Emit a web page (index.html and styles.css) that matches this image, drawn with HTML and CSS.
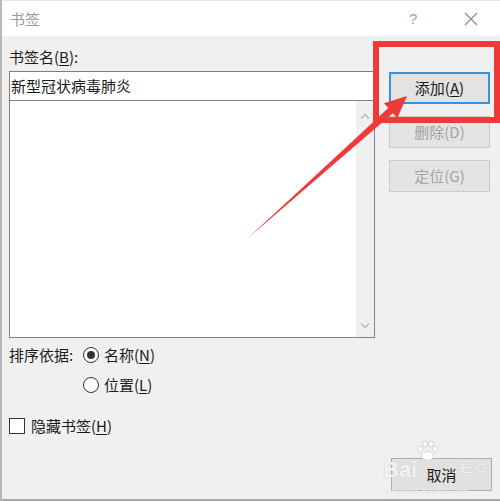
FILE: index.html
```html
<!DOCTYPE html>
<html lang="zh-CN">
<head>
<meta charset="utf-8">
<title>书签</title>
<link rel="stylesheet" href="styles.css">
</head>
<body>
<div class="window">
  <div class="titlebar">
    <span class="title">书签</span>
    <span class="help">?</span>
    <svg class="close" width="14" height="14" viewBox="0 0 14 14"><path d="M1 1L13 13M13 1L1 13" stroke="#8a8a8a" stroke-width="1.2" fill="none"/></svg>
  </div>
  <div class="body">
    <div class="main">
      <div class="left">
        <div class="label">书签名(<u>B</u>):</div>
        <div class="input">新型冠状病毒肺炎</div>
        <div class="list">
          <div class="scroll">
            <svg width="10" height="6" viewBox="0 0 10 6"><path d="M1 5.5L5 1.5L9 5.5" stroke="#b0b0b0" stroke-width="1.2" fill="none"/></svg>
            <svg width="10" height="6" viewBox="0 0 10 6"><path d="M1 0.5L5 4.5L9 0.5" stroke="#b0b0b0" stroke-width="1.2" fill="none"/></svg>
          </div>
        </div>
        <div class="sort">
          <span class="sortlabel">排序依据:</span>
          <div class="radios">
            <div class="opt"><span class="radio checked"></span>名称(<u>N</u>)</div>
            <div class="opt"><span class="radio"></span>位置(<u>L</u>)</div>
          </div>
        </div>
        <div class="check"><span class="box"></span>隐藏书签(<u>H</u>)</div>
      </div>
      <div class="buttons">
        <div class="btn default">添加(<u>A</u>)</div>
        <div class="btn disabled">删除(D)</div>
        <div class="btn disabled">定位(G)</div>
      </div>
    </div>
    <div class="footer">
      <div class="btn">取消</div>
    </div>
  </div>
  <div class="redbox"></div>
  <svg class="arrow" width="500" height="501" viewBox="0 0 500 501"><polygon points="247,239 388.3,108.1 383.9,103.2 407,96 397.3,118.2 392.9,113.3" fill="#f03a3a"/></svg>
  <div class="wm-bai">Bai</div>
  <svg class="wm-paw" width="24" height="22" viewBox="0 0 24 22"><g fill="rgba(255,255,255,0.9)" stroke="#c8c8c8" stroke-width="0.8"><ellipse cx="5" cy="9" rx="2.5" ry="3"/><ellipse cx="10" cy="4" rx="2.5" ry="3"/><ellipse cx="16" cy="4" rx="2.5" ry="3"/><ellipse cx="20" cy="9" rx="2.5" ry="3"/><ellipse cx="12.5" cy="16" rx="6" ry="4.5"/></g></svg>
  <div class="wm-jy">经验</div>
  <div class="wm-url">jingyan.baidu.com</div>
</div>
</body>
</html>
```
FILE: styles.css
```css
* { box-sizing: border-box; }
html, body { margin: 0; padding: 0; background: #ffffff; }
body { width: 500px; height: 501px; overflow: hidden; font-family: "Noto Sans CJK SC", "Noto Sans", sans-serif; font-size: 15px; color: #1a1a1a; }
u { text-decoration: underline; text-underline-offset: 2px; }
.window { position: relative; width: 500px; height: 501px; border-left: 2px solid #b8b8b8; border-bottom: 2px solid #a8a8a8; display: flex; flex-direction: column; }
.titlebar { height: 36px; background: #ffffff; display: flex; align-items: center; padding-left: 8px; border-top: 1px solid #e4e4e4; }
.title { color: #9a9a9a; font-size: 15px; line-height: 20px; flex: 1; }
.help { color: #a0a0a0; font-size: 15px; width: 14px; margin-right: 41px; font-family: "Liberation Sans", sans-serif; }
.close { margin-right: 22px; }
.body { flex: 1; background: #f0f0f0; display: flex; flex-direction: column; padding: 11px 0 0 7px; }
.main { display: flex; }
.left { width: 366px; display: flex; flex-direction: column; }
.label { line-height: 20px; height: 20px; }
.input { margin-top: 4px; height: 30px; background: #fff; border: 1px solid #7e7e7e; line-height: 27px; padding-left: 1px; }
.list { margin-top: -1px; height: 238px; background: #fff; border: 1px solid #828282; display: flex; justify-content: flex-end; }
.scroll { width: 18px; background: #f0f0f0; display: flex; flex-direction: column; justify-content: space-between; align-items: center; padding: 12px 0 8px; }
.sort { display: flex; margin-top: 7px; }
.sortlabel { line-height: 20px; width: 74px; }
.radios { display: flex; flex-direction: column; gap: 10px; }
.opt { display: flex; align-items: center; line-height: 20px; }
.radio { width: 16px; height: 16px; border: 1px solid #333; border-radius: 50%; background: #fff; margin-right: 5px; display: flex; align-items: center; justify-content: center; }
.radio.checked::after { content: ""; width: 8px; height: 8px; border-radius: 50%; background: #333; }
.check { display: flex; align-items: center; line-height: 20px; margin-top: 21px; }
.box { width: 16px; height: 16px; border: 1px solid #333; background: #fff; margin-right: 6px; }
.buttons { margin-left: 14px; margin-top: 25px; display: flex; flex-direction: column; gap: 12px; }
.btn { width: 101px; height: 32px; background: #e1e1e1; border: 1px solid #adadad; display: flex; align-items: center; justify-content: center; line-height: 20px; }
.btn.default { border: 2px solid #3c8fdc; background: #e3e3e3; }
.btn.disabled { color: #a2a2a2; border-color: #cacaca; background: #e4e4e4; }
.footer { margin-top: auto; margin-bottom: 8px; display: flex; justify-content: flex-end; padding-right: 8px; }
.footer .btn { height: 33px; }
.redbox { position: absolute; left: 371px; top: 41px; width: 127px; height: 82px; border: 6px solid #f03a3a; }
.arrow { position: absolute; left: -2px; top: 0; }
.wm-bai { position: absolute; left: 381px; top: 458px; font-family: "Liberation Sans", sans-serif; font-size: 22px; font-weight: bold; line-height: 24px; color: rgba(255,255,255,0.85); text-shadow: 0 0 1px #b5b5b5; }
.wm-paw { position: absolute; left: 413px; top: 440px; }
.wm-jy { position: absolute; left: 458px; top: 458px; font-size: 13px; line-height: 15px; color: rgba(255,255,255,0.85); text-shadow: 0 0 1px #b5b5b5; }
.wm-url { position: absolute; left: 384px; top: 486px; font-family: "Liberation Sans", sans-serif; font-size: 9px; line-height: 10px; letter-spacing: 0.6px; color: rgba(255,255,255,0.8); text-shadow: 0 0 1px #c8c8c8; }
```
